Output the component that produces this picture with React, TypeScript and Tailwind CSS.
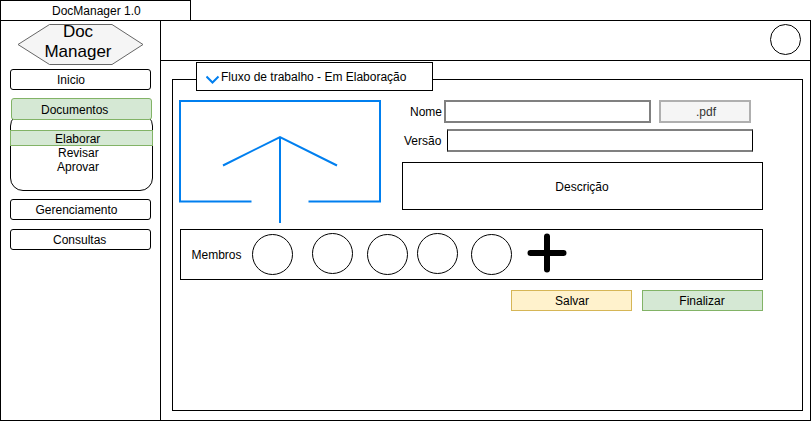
import type { ReactNode } from 'react';

function MenuItem({ children, className = '' }: { children: ReactNode; className?: string }) {
  return (
    <button
      className={`block h-[21px] w-[141px] shrink-0 whitespace-nowrap rounded-[3px] border border-black bg-white pt-[2px] pb-px text-left ${className}`}
    >
      {children}
    </button>
  );
}

function Sidebar() {
  return (
    <aside className="flex w-[160px] shrink-0 flex-col border-r border-black pl-[9px]">
      <div className="grid h-[42px] w-[127px] translate-x-[7px] translate-y-[3px]">
        <svg className="col-start-1 row-start-1" width="127" height="42" viewBox="0 0 127 42">
          <path
            d="M32.500 .5H95L126 20.500L95 40.500H32.500L1 20.500Z"
            fill="#f5f5f5"
            stroke="#666"
          />
        </svg>
        <h1 className="col-start-1 row-start-1 -mt-[2px] -ml-[5px] text-center text-[17px] leading-[20px]">
          Doc
          <br />
          Manager
        </h1>
      </div>
      <nav className="flex flex-col pt-[6px]">
        <MenuItem className="pl-[46px]">Inicio</MenuItem>
        <MenuItem className="relative z-10 mt-[8px] ml-px h-[22px]! border-[#82b366]! bg-[#d5e8d4]! pt-[3px]! pl-[29px]">
          Documentos
        </MenuItem>
        <ul className="-mt-[7px] h-[78px] w-[143px] rounded-[13px] border border-black pt-[16px]">
          <li className="-mx-px h-[16px] border border-[#82b366] bg-[#d5e8d4] pt-px pl-[44px]">Elaborar</li>
          <li className="pl-[47px]">Revisar</li>
          <li className="pl-[46px]">Aprovar</li>
        </ul>
        <MenuItem className="mt-[8px] pl-[24.500px]">Gerenciamento</MenuItem>
        <MenuItem className="mt-[9px] pl-[42px]">Consultas</MenuItem>
      </nav>
    </aside>
  );
}

function UploadArea() {
  return (
    <svg className="shrink-0" width="202" height="124" viewBox="179 100 202 124" fill="none" stroke="#007fef" strokeWidth="2">
      <path d="M251.500 201.500H180V101H380V201.500H308.500" />
      <path d="M280 223V137M223 165.500L280 137L337 165.500" />
    </svg>
  );
}

function Member({ className = '' }: { className?: string }) {
  return (
    <svg className={`shrink-0 ${className}`} width="42" height="42" viewBox="0 0 42 42">
      <circle cx="20.500" cy="20.500" r="20" fill="white" stroke="black" />
    </svg>
  );
}

function Members() {
  return (
    <section className="ml-[7px] flex h-[51px] w-[583px] items-start border border-black pt-[4px] pl-[10.500px]">
      <span className="mt-[14px] w-[60.500px]">Membros</span>
      <Member />
      <Member className="-mt-px ml-[18px]" />
      <Member className="ml-[13px]" />
      <Member className="-mt-px ml-[8px]" />
      <Member className="ml-[12px]" />
      <svg className="-mt-px ml-[14px]" width="40" height="40" viewBox="527 233 40 40" stroke="black" strokeWidth="6" strokeLinecap="round">
        <path d="M547 236.500V269.500M530.500 253H563.500" />
      </svg>
    </section>
  );
}

function DocumentForm() {
  return (
    <div className="ml-[21px] w-[361px]">
      <div className="flex h-[23px]">
        <label className="w-[42px] pt-[5px] pl-[8px]">Nome</label>
        <input className="h-[23px] w-[207px] border-2 border-[#808080] bg-white" />
        <div className="ml-[8px] h-[23px] w-[92px] border-2 border-[#afafaf] bg-[#f5f5f5] pt-[3px] pl-[2px] text-center text-[#333]">
          .pdf
        </div>
      </div>
      <div className="mt-[6px] flex h-[23px]">
        <label className="w-[45px] pt-[5px] pl-[2px]">Versão</label>
        <input className="h-[23px] w-[306px] border-x border-y-2 border-x-black border-y-[#808080] bg-white" />
      </div>
      <div className="mt-[10px] flex h-[48px] items-center justify-center border border-black pt-px pr-px">
        Descrição
      </div>
    </div>
  );
}

export default function App() {
  return (
    <div className="flex h-[421px] w-[811px] flex-col overflow-hidden bg-white font-['Liberation_Sans',Arial,sans-serif] text-[12px] leading-[14px] text-black">
      <div className="h-[20px] w-[191px] border border-b-0 border-black pt-[3px] pl-[51px]">DocManager 1.0</div>
      <div className="flex h-[401px] border border-black">
        <Sidebar />
        <main className="flex flex-1 flex-col">
          <header className="flex h-[40px] justify-end border-b border-black pt-[3px] pr-[8px]">
            <svg width="32" height="32" viewBox="0 0 32 32">
              <circle cx="15.500" cy="15.500" r="15" fill="white" stroke="black" />
            </svg>
          </header>
          <section className="mt-[18px] ml-[11px] h-[332px] w-[631px] border border-black">
            <div className="-mt-[18px] ml-[23px] flex h-[29px] w-[237px] border border-black bg-white pt-[7px] pl-[9px]">
              <svg className="mt-[4px]" width="15" height="11" viewBox="0 0 15 11" fill="none" stroke="#007fef" strokeWidth="2">
                <path d="M.5 2.500L6.500 8.500L12.500 2.500" />
              </svg>
              <h2>Fluxo de trabalho - Em Elaboração</h2>
            </div>
            <div className="mt-[9px] ml-[6px] flex h-[129px]">
              <UploadArea />
              <DocumentForm />
            </div>
            <Members />
            <div className="mt-[10px] flex w-[590px] justify-end gap-[10px]">
              <button className="h-[21px] w-[121px] border border-[#d6b656] bg-[#fff2cc] pl-px">Salvar</button>
              <button className="h-[21px] w-[121px] border border-[#82b366] bg-[#d5e8d4] pr-px">Finalizar</button>
            </div>
          </section>
        </main>
      </div>
    </div>
  );
}
